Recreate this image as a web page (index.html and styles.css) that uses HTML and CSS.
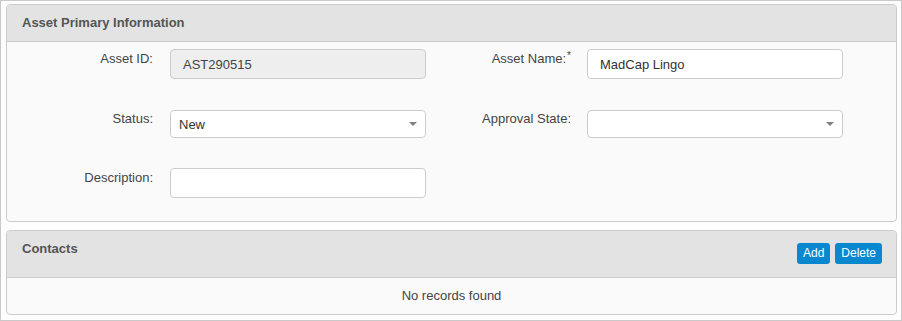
FILE: index.html
```html
<!DOCTYPE html>
<html>
<head>
<meta charset="utf-8">
<link rel="stylesheet" href="styles.css">
</head>
<body>
<div class="frame">
  <section class="panel">
    <div class="panel-heading">
      <h3 class="panel-title">Asset Primary Information</h3>
    </div>
    <div class="panel-body form-grid">
      <label class="form-label">Asset ID:</label>
      <input class="form-control" type="text" value="AST290515" disabled>
      <label class="form-label">Asset Name:<sup class="req">*</sup></label>
      <input class="form-control" type="text" value="MadCap Lingo">

      <label class="form-label">Status:</label>
      <div class="select-wrap">
        <select class="form-select"><option>New</option></select>
      </div>
      <label class="form-label">Approval State:</label>
      <div class="select-wrap">
        <select class="form-select"><option></option></select>
      </div>

      <label class="form-label">Description:</label>
      <input class="form-control" type="text" value="">
    </div>
  </section>

  <section class="panel">
    <div class="panel-heading heading-actions">
      <h3 class="panel-title">Contacts</h3>
      <div class="actions">
        <button class="btn">Add</button>
        <button class="btn">Delete</button>
      </div>
    </div>
    <div class="panel-body empty">No records found</div>
  </section>
</div>
</body>
</html>
```

FILE: styles.css
```css
* { box-sizing: border-box; }

html, body {
  margin: 0;
  padding: 0;
  background: #ffffff;
}

body {
  font-family: "Liberation Sans", Arial, sans-serif;
  font-size: 13px;
  color: #444;
}

.frame {
  width: 902px;
  height: 321px;
  border: 1px solid #c9c9c9;
  background: #fdfdfd;
  padding: 3px 4px 0 5px;
  display: flex;
  flex-direction: column;
  gap: 8px;
}

.panel {
  border: 1px solid #cccccc;
  border-radius: 4px;
  background: #fafafa;
  overflow: hidden;
}

.panel-heading {
  background: #e3e3e3;
  border-bottom: 1px solid #cccccc;
  padding: 8px 15px;
}

.panel-title {
  margin: 0;
  font-size: 13px;
  line-height: 20px;
  font-weight: bold;
  color: #555;
}

.heading-actions {
  display: flex;
  justify-content: space-between;
  align-items: flex-start;
  padding: 8px 14px 13px 15px;
}

.actions {
  display: flex;
  gap: 5px;
  margin-top: 4px;
}

.btn {
  height: 21px;
  padding: 0 6px;
  border: none;
  border-radius: 3px;
  background: #0a88cf;
  color: #ffffff;
  font-family: "Liberation Sans", Arial, sans-serif;
  font-size: 12px;
  line-height: 21px;
}

.form-grid {
  display: grid;
  grid-template-columns: 163px 256px 161px 256px;
  grid-template-rows: 30px 29px 30px;
  row-gap: 30px;
  padding: 7px 0 23px 0;
}

.form-label {
  text-align: right;
  line-height: 20px;
  color: #444;
  padding-right: 17px;
}

.form-grid .form-label:nth-of-type(even) {
  padding-right: 16px;
}

.req {
  font-size: 10px;
  vertical-align: top;
  position: relative;
  top: -3px;
  margin-left: 1px;
}

.form-control {
  width: 256px;
  height: 30px;
  border: 1px solid #cccccc;
  border-radius: 4px;
  background: #ffffff;
  padding: 0 12px;
  font-family: "Liberation Sans", Arial, sans-serif;
  font-size: 13px;
  color: #333;
  margin: 0;
}

.form-control:disabled {
  background: #eeeeee;
  color: #444;
}

.select-wrap {
  position: relative;
  height: 29px;
  padding-top: 1px;
}

.form-select {
  appearance: none;
  -webkit-appearance: none;
  width: 256px;
  height: 28px;
  border: 1px solid #cccccc;
  border-radius: 4px;
  background: #ffffff;
  padding: 0 8px;
  font-family: "Liberation Sans", Arial, sans-serif;
  font-size: 13px;
  color: #333;
  margin: 0;
  display: block;
}

.select-wrap::after {
  content: "";
  position: absolute;
  right: 9px;
  top: 13px;
  border-left: 4px solid transparent;
  border-right: 4px solid transparent;
  border-top: 4px solid #808080;
}

.empty {
  text-align: center;
  line-height: 20px;
  padding: 8px 0;
  color: #444;
}
```
